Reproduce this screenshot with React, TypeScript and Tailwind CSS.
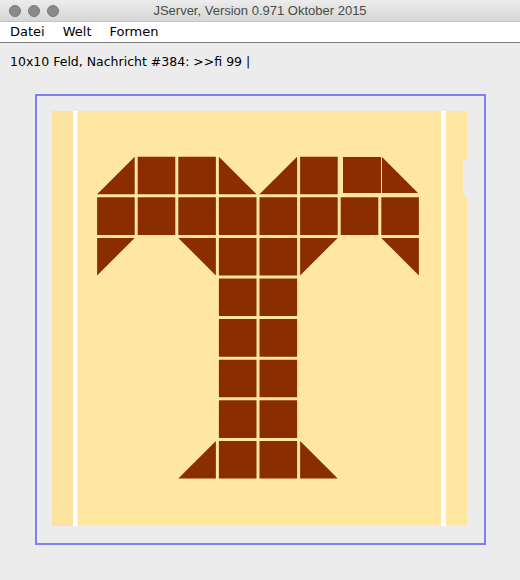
import React from "react";

type Kind = "sq" | "LR" | "LL" | "UL" | "UR";

const CELL = 40.6;
const OX = 3;
const OY = 3.6;
const INS = 1.5;
const BROWN = "#8a2e00";

const cells: [number, number, Kind][] = [
  [1, 1, "LR"], [2, 1, "sq"], [3, 1, "sq"], [4, 1, "LL"], [5, 1, "LR"], [6, 1, "sq"],
  [1, 2, "sq"], [2, 2, "sq"], [3, 2, "sq"], [4, 2, "sq"], [5, 2, "sq"], [6, 2, "sq"], [7, 2, "sq"], [8, 2, "sq"],
  [1, 3, "UL"], [3, 3, "UR"], [4, 3, "sq"], [5, 3, "sq"], [6, 3, "UL"], [8, 3, "UR"],
  [4, 4, "sq"], [5, 4, "sq"],
  [4, 5, "sq"], [5, 5, "sq"],
  [4, 6, "sq"], [5, 6, "sq"],
  [4, 7, "sq"], [5, 7, "sq"],
  [3, 8, "LR"], [4, 8, "sq"], [5, 8, "sq"], [6, 8, "LL"],
];

function shape(c: number, r: number, k: Kind, i: number) {
  const x0 = OX + CELL * c + INS;
  const y0 = OY + CELL * r + INS;
  const x1 = OX + CELL * (c + 1) - INS;
  const y1 = OY + CELL * (r + 1) - INS;
  let pts = "";
  if (k === "sq") pts = `${x0},${y0} ${x1},${y0} ${x1},${y1} ${x0},${y1}`;
  if (k === "LR") pts = `${x1},${y0} ${x1},${y1} ${x0},${y1}`;
  if (k === "LL") pts = `${x0},${y0} ${x0},${y1} ${x1},${y1}`;
  if (k === "UL") pts = `${x0},${y0} ${x1},${y0} ${x0},${y1}`;
  if (k === "UR") pts = `${x0},${y0} ${x1},${y0} ${x1},${y1}`;
  return <polygon key={i} points={pts} fill={BROWN} />;
}

function Field() {
  return (
    <svg width="415" height="415" viewBox="0 0 415 415" className="block">
      <rect x="0" y="0" width="415" height="415" fill="#ffe7a2" />
      <rect x="0" y="0" width="21" height="415" fill="#fde3a0" />
      <rect x="21" y="0" width="4.5" height="415" fill="#ffffff" />
      <rect x="389" y="0" width="5" height="415" fill="#ffffff" />
      <rect x="411" y="48" width="4" height="36" fill="#ececec" />
      {cells.map(([c, r, k], i) => shape(c, r, k, i))}
      <polygon points="291,46 329,46 329,82 291,82" fill={BROWN} />
      <polygon points="330,46 330,82 366,82" fill={BROWN} />
    </svg>
  );
}

export default function App() {
  return (
    <div className="w-[520px] h-[580px] bg-[#ececec] flex flex-col overflow-hidden">
      <div
        className="h-[22px] relative flex items-center justify-center border-b border-[#c4c4c4]"
        style={{ background: "linear-gradient(#ececec, #d6d6d6)" }}
      >
        <div className="absolute left-[9px] top-[5px] flex gap-[7px]">
          <div className="w-[12px] h-[12px] rounded-full bg-[#8a8a8a] border border-[#787878]" />
          <div className="w-[12px] h-[12px] rounded-full bg-[#8a8a8a] border border-[#787878]" />
          <div className="w-[12px] h-[12px] rounded-full bg-[#8a8a8a] border border-[#787878]" />
        </div>
        <span className="text-[13px] text-[#4a4a4a] font-['Liberation_Sans',sans-serif] leading-none">
          JServer, Version 0.971 Oktober 2015
        </span>
      </div>
      <div className="h-[21px] bg-white border-b border-[#7a7a7a] flex items-center pl-[10px] gap-[18px] text-[13px] text-black font-['DejaVu_Sans',sans-serif]">
        <span>Datei</span>
        <span>Welt</span>
        <span>Formen</span>
      </div>
      <div className="pl-[10px] pt-[11px] h-[30px] text-[12.5px] text-black font-['DejaVu_Sans',sans-serif] leading-[16px]">
        10x10 Feld, Nachricht #384: &gt;&gt;fi 99 |
      </div>
      <div className="pl-[35px] pt-[21px]">
        <div className="w-[451px] h-[451px] border-2 border-[#7f7ff0] p-[15px]">
          <Field />
        </div>
      </div>
    </div>
  );
}
